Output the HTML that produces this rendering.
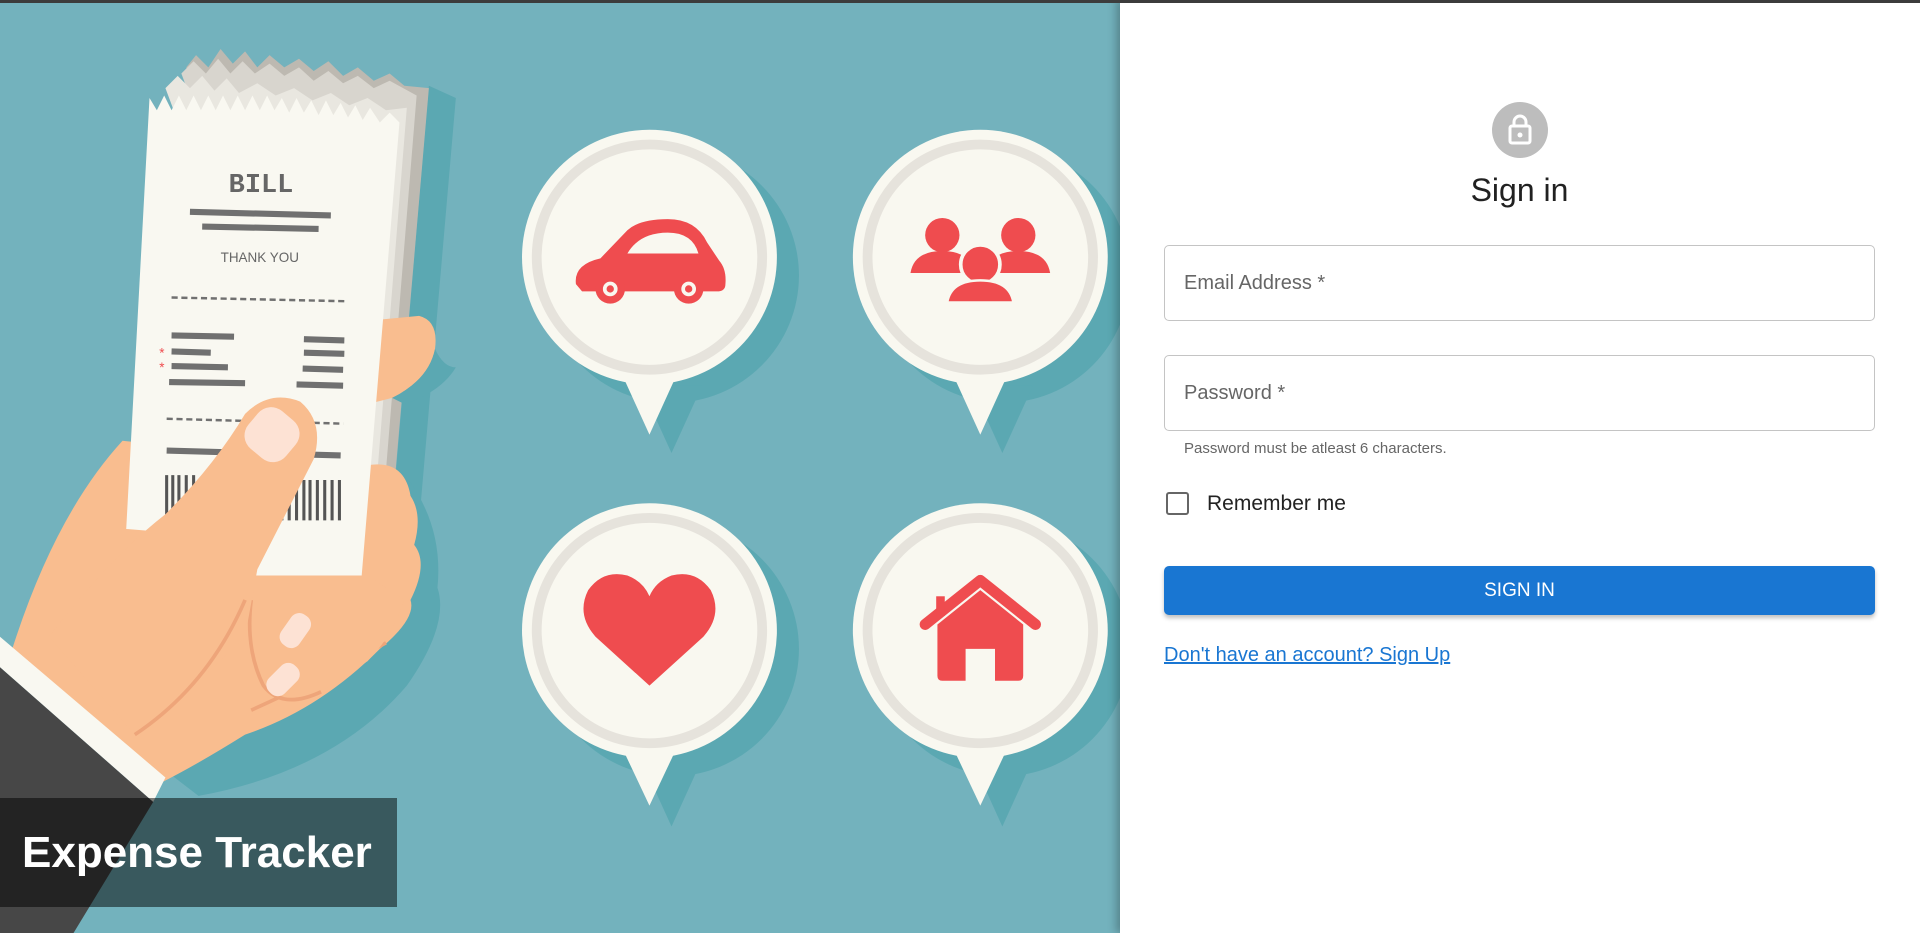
<!DOCTYPE html>
<html><head><meta charset="utf-8"><style>
*{box-sizing:border-box;margin:0;padding:0}
body{width:1920px;height:933px;overflow:hidden;background:#fff;font-family:"Liberation Sans",Arial,sans-serif;position:relative}
.top{position:absolute;left:0;top:0;width:1920px;height:3px;background:#3c3c3c;z-index:5}
.left{position:absolute;left:0;top:0;width:1120px;height:933px;background:#73b2bd;overflow:hidden}
.title{position:absolute;left:0;top:798px;width:397px;height:109px;background:rgba(0,0,0,0.5);color:#fff;font-weight:bold;font-size:44px;line-height:109px;padding-left:22px}
.right{position:absolute;left:1120px;top:0;width:800px;height:933px;background:#fff;box-shadow:-4px 0 8px rgba(0,0,0,0.25)}
.av{position:absolute;left:1492px;top:102px;width:56px;height:56px;border-radius:50%;background:#bdbdbd}
.h{position:absolute;left:1164px;width:711px;text-align:center;top:172px;font-size:32px;color:#212121}
.inp{position:absolute;left:1164px;width:711px;height:76px;border:1px solid #c4c4c4;border-radius:5px;font-size:20px;color:#666;padding-left:19px;line-height:74px}
.help{position:absolute;left:1184px;top:440px;font-size:15px;color:#666}
.cb{position:absolute;left:1166px;top:492px;width:23px;height:23px;border:2.5px solid #666;border-radius:3px}
.rm{position:absolute;left:1207px;top:492px;font-size:21px;color:#222}
.btn{position:absolute;left:1164px;top:566px;width:711px;height:49px;background:#1976d2;border-radius:5px;color:#fff;text-align:center;line-height:49px;font-size:19px;box-shadow:0 3px 4px rgba(0,0,0,0.25)}
.lnk{position:absolute;left:1164px;top:644px;font-size:20px;color:#1976d2;text-decoration:underline}
</style></head><body>
<div class="top"></div>
<div class="left">
<svg width="1120" height="933" viewBox="0 0 914 762" preserveAspectRatio="none">
<g fill="#5ba8b2">
<circle cx="548" cy="225" r="104"/><polygon points="523,315 573,315 548,370"/>
<circle cx="818" cy="225" r="104"/><polygon points="793,315 843,315 818,370"/>
<circle cx="548" cy="530" r="104"/><polygon points="523,620 573,620 548,675"/>
<circle cx="818" cy="530" r="104"/><polygon points="793,620 843,620 818,675"/>
</g>
<g fill="#f9f8f0">
<circle cx="530" cy="210" r="104"/><polygon points="505,300 555,300 530,355"/>
<circle cx="800" cy="210" r="104"/><polygon points="775,300 825,300 800,355"/>
<circle cx="530" cy="515" r="104"/><polygon points="505,605 555,605 530,658"/>
<circle cx="800" cy="515" r="104"/><polygon points="775,605 825,605 800,658"/>
</g>
<g fill="none" stroke="#e6e3dc" stroke-width="8">
<circle cx="530" cy="210" r="92"/><circle cx="800" cy="210" r="92"/>
<circle cx="530" cy="515" r="92"/><circle cx="800" cy="515" r="92"/>
</g>
<g fill="#ef4c4f">
<path d="M470 232 Q468 216 490 211 L512 188 Q522 179 545 179 Q568 179 577 198 L587 213 Q593 220 592 232 Q592 238 585 238 L475 238 Z"/>
<path d="M512 207 Q522 190 545 190 Q565 190 570 207 Z" fill="#f9f8f0"/>
<circle cx="498" cy="236" r="12"/><circle cx="562" cy="236" r="12"/>
<circle cx="498" cy="236" r="6" fill="#f9f8f0"/><circle cx="562" cy="236" r="6" fill="#f9f8f0"/>
<circle cx="498" cy="236" r="3"/><circle cx="562" cy="236" r="3"/>
<circle cx="769" cy="192" r="14"/><circle cx="831" cy="192" r="14"/>
<path d="M743 223 Q746 205 769 205 Q792 205 795 223 Z"/><path d="M805 223 Q808 205 831 205 Q854 205 857 223 Z"/>
<circle cx="800" cy="216" r="16" stroke="#f9f8f0" stroke-width="3"/>
<path d="M773 247 Q776 229 800 229 Q824 229 827 247 Z" stroke="#f9f8f0" stroke-width="2"/>
<path d="M530 560 L486 520 Q470 502 480 482 Q492 465 512 470 Q525 475 530 487 Q535 475 548 470 Q568 465 580 482 Q590 502 574 520 Z"/>
<path d="M755 510 L800 474 L845 510" fill="none" stroke="#ef4c4f" stroke-width="9" stroke-linecap="round" stroke-linejoin="round"/>
<rect x="764" y="487" width="7" height="16"/>
<path d="M765 510 L800 482 L835 510 L835 552 Q835 556 831 556 L812 556 L812 530 L788 530 L788 556 L769 556 Q765 556 765 552 Z"/>
<rect x="792" y="533" width="16" height="23" fill="#f9f8f0"/>
</g>
<!-- receipt shadow -->
<polygon points="350,70 372,80 340,450 318,445" fill="#5ba8b2"/>
<!-- back receipts -->
<polygon points="152,55 160,45 170,55 180,40 190,52 200,42 210,55 220,45 232,55 244,48 256,58 268,50 280,62 292,55 305,66 318,60 330,70 350,72 318,440 300,440" fill="#bdb9b1"/>
<polygon points="148,60 158,50 168,60 178,48 188,60 198,50 208,60 220,52 232,62 244,55 256,66 268,58 280,68 292,62 305,72 318,66 340,78 310,445 290,445" fill="#d8d5ce"/>
<polygon points="135,72 145,62 155,72 165,62 175,74 185,64 195,76 210,68 225,78 240,72 255,82 270,76 285,86 300,80 315,90 332,88 302,460 280,460" fill="#e9e7e0"/>
<!-- finger behind -->
<path d="M300 262 L342 258 Q358 262 355 285 Q350 310 320 325 L300 330 Z" fill="#f9bd8f"/>
<path d="M355 285 Q362 300 372 300 Q360 320 330 330 L320 325 Q350 310 355 285Z" fill="#5ba8b2"/>
<!-- hand shadow -->
<path d="M20 540 Q60 410 120 370 L320 380 Q350 420 345 470 Q355 500 320 550 Q260 620 150 640 Z" fill="#5ba8b2" transform="translate(12,10)"/>
<!-- palm & fingers -->
<path d="M10 530 Q45 420 100 360 L300 380 Q330 375 335 405 Q345 420 338 445 Q350 460 335 490 Q340 505 310 530 Q260 580 200 600 Q160 625 130 640 Z" fill="#f9bd8f"/>
<path d="M215 545 Q245 530 300 495 M205 580 Q250 560 315 525" fill="none" stroke="#eea57a" stroke-width="3"/>
<!-- main receipt -->
<polygon points="122,80 128,90 134,78 140,90 146,78 152,90 158,78 164,90 170,78 176,90 182,78 188,90 194,78 200,90 206,78 212,90 218,78 224,90 230,80 236,92 242,80 248,92 254,82 260,94 266,82 272,94 278,84 284,96 290,86 296,98 302,88 310,100 318,92 326,100 295,472 205,470 200,440 103,432" fill="#f9f8f1"/>
<text x="213" y="157" font-family="Liberation Mono,monospace" font-weight="bold" font-size="22" fill="#666" text-anchor="middle">BILL</text>
<g stroke="#707070" stroke-width="5">
<line x1="155" y1="173" x2="270" y2="176"/><line x1="165" y1="185" x2="260" y2="187"/>
<line x1="140" y1="274" x2="191" y2="275"/><line x1="140" y1="287" x2="172" y2="288"/><line x1="140" y1="299" x2="186" y2="300"/><line x1="138" y1="312" x2="200" y2="313"/>
<line x1="248" y1="277" x2="281" y2="278"/><line x1="248" y1="288" x2="281" y2="289"/><line x1="247" y1="301" x2="280" y2="302"/><line x1="242" y1="314" x2="280" y2="315"/>
<line x1="136" y1="368" x2="278" y2="372"/>
</g>
<text x="212" y="214" font-family="Liberation Sans,sans-serif" font-size="11" fill="#666" text-anchor="middle">THANK  YOU</text>
<g stroke="#707070" stroke-width="2" stroke-dasharray="5,3"><line x1="140" y1="243" x2="282" y2="246"/><line x1="136" y1="342" x2="280" y2="346"/></g>
<text x="130" y="292" font-size="11" fill="#ef4c4f">*</text><text x="130" y="304" font-size="11" fill="#ef4c4f">*</text>
<g stroke="#555" stroke-width="2.5"><path d="M136 388V424M141 388V424M146 388V424M152 388V420M158 388V420M230 392V425M236 392V425M242 392V425M248 392V425M253 392V425M259 392V425M265 392V425M271 392V425M277 392V425"/></g>
<!-- lower fingers in front -->
<path d="M200 470 Q200 520 215 555 Q230 580 262 565 L300 540 Q320 520 330 490 L300 470 Z" fill="#f9bd8f"/>
<path d="M205 490 Q200 530 215 560 Q230 580 262 565" fill="none" stroke="#eea57a" stroke-width="3"/>
<rect x="232" y="500" width="18" height="30" rx="8" transform="rotate(35 241 515)" fill="#fde2d4"/>
<rect x="222" y="540" width="18" height="30" rx="8" transform="rotate(45 231 555)" fill="#fde2d4"/>
<!-- thumb -->
<path d="M40 520 Q90 455 135 420 Q175 380 200 338 Q220 318 245 328 Q265 345 256 375 L210 465 L200 520 Q160 560 110 600 Z" fill="#f9bd8f"/>
<path d="M110 600 Q170 560 200 490" fill="none" stroke="#eea57a" stroke-width="3"/>
<rect x="202" y="335" width="40" height="40" rx="14" transform="rotate(40 222 355)" fill="#fde2d4"/>
<!-- cuff & sleeve -->
<polygon points="0,520 0,545 125,655 135,635" fill="#f9f8f1"/>
<polygon points="0,545 125,655 60,762 0,762" fill="#474747"/>
</svg>
<div class="title">Expense Tracker</div>
</div>
<div class="right"></div>
<div class="av"><svg width="56" height="56" viewBox="0 0 56 56"><rect x="18" y="24" width="20" height="17" rx="2" fill="none" stroke="#fff" stroke-width="3"/><path d="M22 24v-4a6 6 0 0 1 12 0v4" fill="none" stroke="#fff" stroke-width="3"/><circle cx="28" cy="33" r="2.5" fill="#fff"/></svg></div>
<div class="h">Sign in</div>
<div class="inp" style="top:245px">Email Address *</div>
<div class="inp" style="top:355px">Password *</div>
<div class="help">Password must be atleast 6 characters.</div>
<div class="cb"></div>
<div class="rm">Remember me</div>
<div class="btn">SIGN IN</div>
<div class="lnk">Don't have an account? Sign Up</div>
</body></html>
